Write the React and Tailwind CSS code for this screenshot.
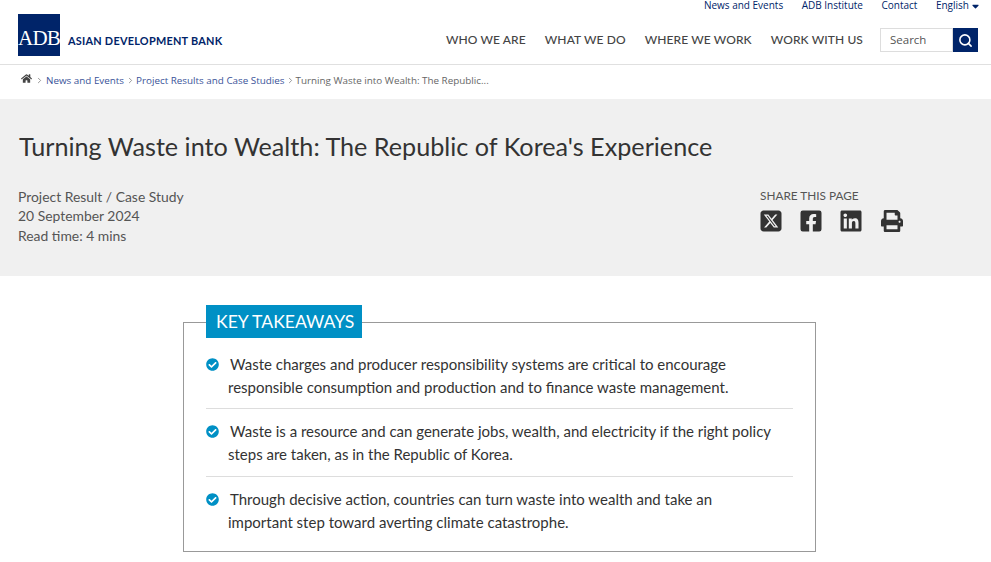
import React from 'react';
import { Search, ChevronRight } from 'lucide-react';
import { FaSquareXTwitter, FaCaretDown } from 'react-icons/fa6';
import { FaFacebookSquare, FaLinkedin, FaPrint, FaCheckCircle, FaHome } from 'react-icons/fa';

const topLinks = ['News and Events', 'ADB Institute', 'Contact'];
const navLinks = ['WHO WE ARE', 'WHAT WE DO', 'WHERE WE WORK', 'WORK WITH US'];

const takeaways = [
  [
    'Waste charges and producer responsibility systems are critical to encourage',
    'responsible consumption and production and to finance waste management.',
  ],
  [
    'Waste is a resource and can generate jobs, wealth, and electricity if the right policy',
    'steps are taken, as in the Republic of Korea.',
  ],
  [
    'Through decisive action, countries can turn waste into wealth and take an',
    'important step toward averting climate catastrophe.',
  ],
];

const Header = () => (
  <header className="h-[65px] border-b border-[#e0e0e0] pl-[18px] pr-[13px] flex justify-between">
    <div className="flex items-end pt-[14px] pb-[8px]">
      <div className="w-[42px] h-[42px] bg-[#002469] flex items-end justify-center pb-[8px]">
        <span className="font-['Liberation_Serif',serif] text-[21px] leading-[20px] text-white tracking-[-0.8px]">ADB</span>
      </div>
      <span className="ml-[8px] mb-[8px] text-[10.9px] leading-[14px] font-bold text-[#002469] tracking-[0.25px]">
        ASIAN DEVELOPMENT BANK
      </span>
    </div>

    <div className="flex flex-col items-end">
      <div className="h-[27px] flex items-start text-[10px] leading-[11px] text-[#002469] font-['Open_Sans',sans-serif] gap-[18.5px] -mr-[2px]">
        {topLinks.map((link) => (
          <span key={link}>{link}</span>
        ))}
        <span className="flex items-center gap-[2px]">
          English <FaCaretDown className="w-[9px] h-[10px]" />
        </span>
      </div>
      <div className="flex items-center">
        <nav className="flex gap-[19px] text-[12px] leading-[26px] font-medium tracking-[0.1px] text-[#444444] mr-[17px]">
          {navLinks.map((link) => (
            <span key={link}>{link}</span>
          ))}
        </nav>
        <div className="w-[73px] h-[24px] border border-[#dddddd] text-[11.5px] leading-[22px] text-[#555555] pl-[9px] font-['Open_Sans',sans-serif]">
          Search
        </div>
        <div className="w-[25px] h-[24px] bg-[#002469] flex items-center justify-center">
          <Search className="w-[15px] h-[15px] text-white" strokeWidth={2.5} />
        </div>
      </div>
    </div>
  </header>
);

const Breadcrumb = () => (
  <div className="h-[34px] pl-[21px] pb-[4px] flex items-center text-[9.85px] font-['Open_Sans',sans-serif] text-[#3a5399]">
    <FaHome className="w-[11px] h-[11px] text-[#444444] mb-[3px]" />
    <ChevronRight className="w-[9px] h-[9px] text-[#777777] mx-[2.5px]" />
    <span>News and Events</span>
    <ChevronRight className="w-[9px] h-[9px] text-[#777777] mx-[1.5px]" />
    <span>Project Results and Case Studies</span>
    <ChevronRight className="w-[9px] h-[9px] text-[#777777] mx-[1px]" />
    <span className="text-[#666666]">Turning Waste into Wealth: The Republic...</span>
  </div>
);

const Hero = () => (
  <section className="h-[177px] bg-[#f0f0f0] pl-[18px] pt-[29px]">
    <h1 className="text-[25.2px] leading-[36px] text-[#333333] pl-[1px]">
      Turning Waste into Wealth: The Republic of Korea's Experience
    </h1>
    <div className="flex mt-[22px]">
      <div className="w-[742px] text-[13.9px] leading-[19.5px] text-[#555555] pt-[0.5px]">
        <p>Project Result / Case Study</p>
        <p>20 September 2024</p>
        <p>Read time: 4 mins</p>
      </div>
      <div>
        <p className="text-[11.8px] leading-[16px] text-[#555555] pt-[2px]">SHARE THIS PAGE</p>
        <div className="flex gap-[18px] mt-[5px] text-[#333333]">
          <FaSquareXTwitter className="w-[22px] h-[24px]" />
          <FaFacebookSquare className="w-[22px] h-[24px]" />
          <FaLinkedin className="w-[22px] h-[24px]" />
          <FaPrint className="w-[22px] h-[24px] ml-[1px]" />
        </div>
      </div>
    </div>
  </section>
);

const Takeaway = ({ lines, last }) => (
  <li className={`mx-[22px] pt-[11px] first:pt-[10px] first:pb-[10px] ${last ? '' : 'border-b border-[#dddddd] pb-[11px]'}`}>
    <div className="flex items-center">
      <FaCheckCircle className="w-[13px] h-[13px] text-[#0090c5] mr-[11px] shrink-0" />
      <span>{lines[0]}</span>
    </div>
    <div className="pl-[22px]">{lines[1]}</div>
  </li>
);

const KeyTakeaways = () => (
  <div className="relative ml-[183px] mt-[46px] w-[633px] h-[230px] border border-[#999999] pt-[20px]">
    <div className="absolute left-[22px] top-[-18px] h-[33px] w-[156px] pl-[10px] bg-[#0090c5] text-white text-[17.6px] leading-[33px]">
      KEY TAKEAWAYS
    </div>
    <ul className="text-[15px] leading-[22.5px] text-[#333333]">
      {takeaways.map((lines, i) => (
        <Takeaway key={i} lines={lines} last={i === takeaways.length - 1} />
      ))}
    </ul>
  </div>
);

export default function App() {
  return (
    <div className="w-[991px] h-[562px] overflow-hidden bg-white font-['Lato',sans-serif]">
      <Header />
      <Breadcrumb />
      <Hero />
      <KeyTakeaways />
    </div>
  );
}
